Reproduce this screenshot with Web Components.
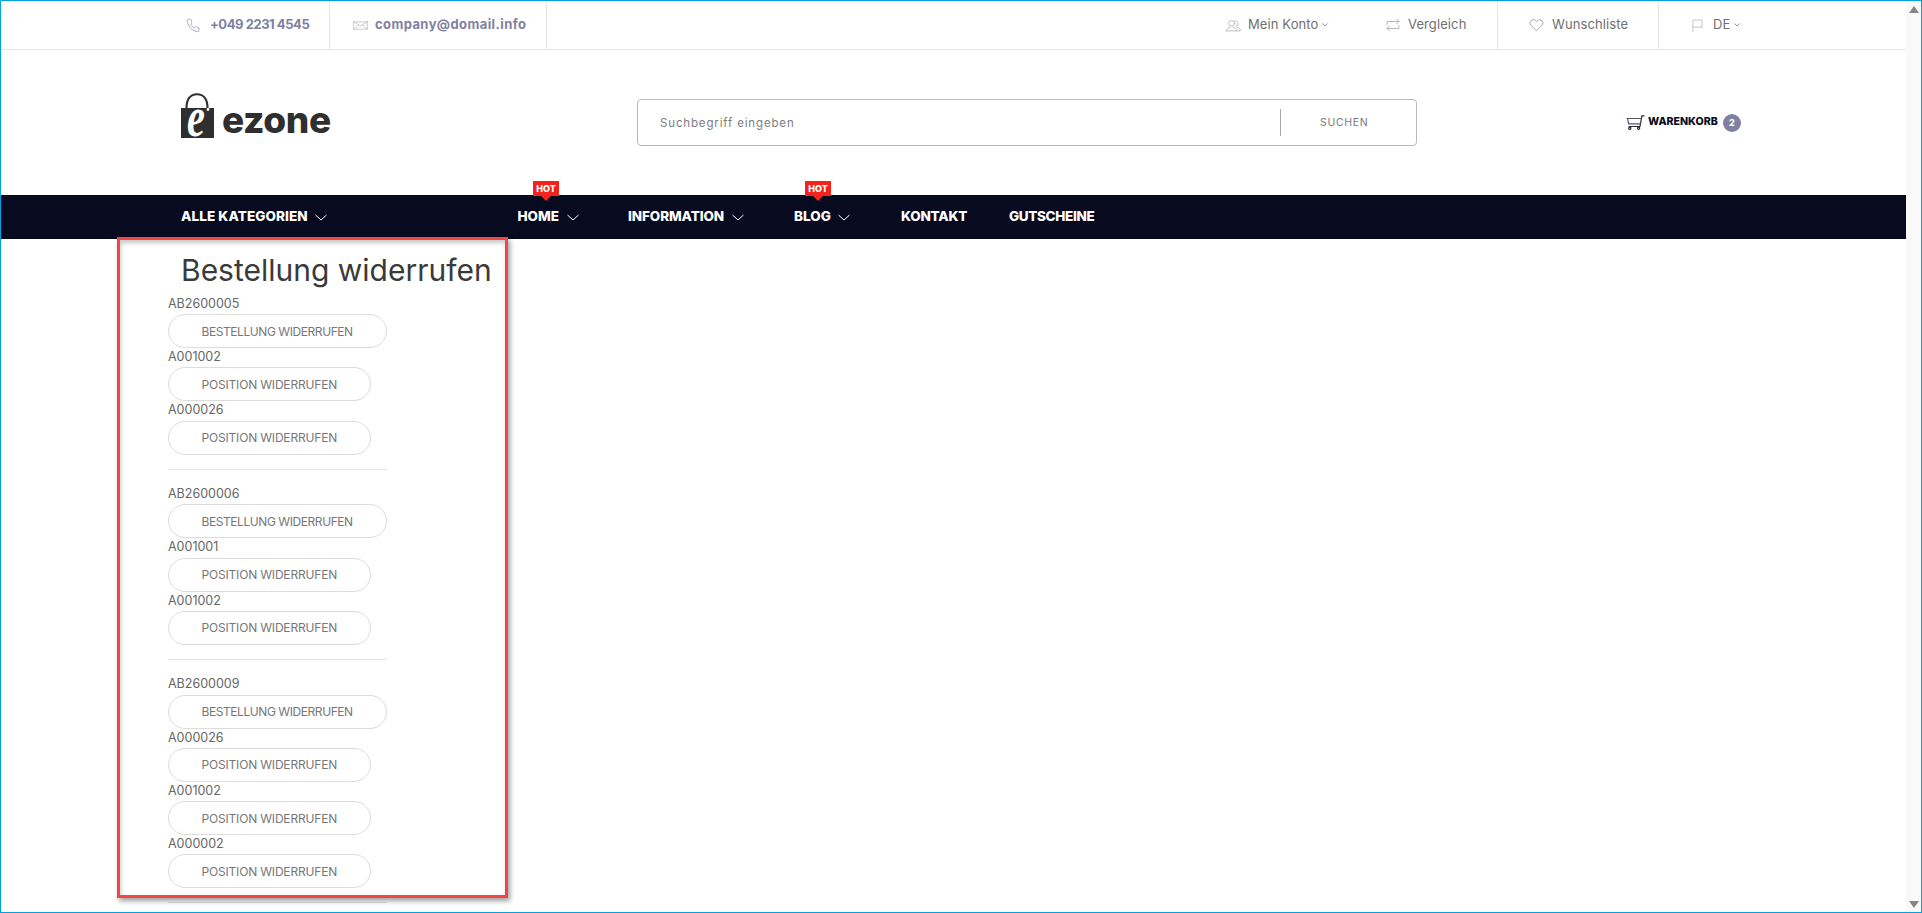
<!DOCTYPE html>
<html lang="de">
<head>
<meta charset="utf-8">
<title>Bestellung widerrufen</title>
<style>
  html, body { margin: 0; padding: 0; height: 913px; overflow: hidden; background: #fff; }
</style>
</head>
<body>
<site-frame>
  <top-bar>
    <top-link slot="left" icon="phone" width="144" pad="0" gap="10" spacing="-.45" strong divider>+049 2231 4545</top-link>
    <top-link slot="left" icon="mail" width="217" pad="23" gap="7" spacing=".4" strong divider>company@domail.info</top-link>
    <top-link slot="right" icon="users" width="160" gap="7" caret>Mein Konto</top-link>
    <top-link slot="right" icon="compare" width="112" gap="8" divider>Vergleich</top-link>
    <top-link slot="right" icon="heart" width="161" pad="31" gap="8" divider>Wunschliste</top-link>
    <top-link slot="right" icon="flag" width="80" pad="33" gap="10" caret>DE</top-link>
  </top-bar>
  <site-header>
    <shop-logo slot="logo"></shop-logo>
    <search-box slot="search" placeholder="Suchbegriff eingeben" action="Suchen"></search-box>
    <cart-link slot="cart" count="2">Warenkorb</cart-link>
  </site-header>
  <main-nav>
    <nav-item width="336.5" spacing=".1" chevron>Alle Kategorien</nav-item>
    <nav-item width="110.5" chevron hot="15.5">Home</nav-item>
    <nav-item width="166" spacing="-.1" chevron>Information</nav-item>
    <nav-item width="107" chevron hot="11">Blog</nav-item>
    <nav-item width="108" spacing="-.2">Kontakt</nav-item>
    <nav-item spacing="-.35">Gutscheine</nav-item>
  </main-nav>
  <withdraw-page heading="Bestellung widerrufen">
    <order-block>
      <withdraw-row code="AB2600005" order>Bestellung widerrufen</withdraw-row>
      <withdraw-row code="A001002">Position widerrufen</withdraw-row>
      <withdraw-row code="A000026">Position widerrufen</withdraw-row>
    </order-block>
    <order-block>
      <withdraw-row code="AB2600006" order>Bestellung widerrufen</withdraw-row>
      <withdraw-row code="A001001">Position widerrufen</withdraw-row>
      <withdraw-row code="A001002">Position widerrufen</withdraw-row>
    </order-block>
    <order-block>
      <withdraw-row code="AB2600009" order>Bestellung widerrufen</withdraw-row>
      <withdraw-row code="A000026">Position widerrufen</withdraw-row>
      <withdraw-row code="A001002">Position widerrufen</withdraw-row>
      <withdraw-row code="A000002">Position widerrufen</withdraw-row>
    </order-block>
  </withdraw-page>
</site-frame>

<script>
// kleine Helfer fuer die Icons der Kopfleiste
const ICONS = {
  phone: { w: 14, h: 15, stroke: '#9fa0b8', body: '<path d="M22 16.92v3a2 2 0 0 1-2.18 2 19.79 19.79 0 0 1-8.63-3.07 19.5 19.5 0 0 1-6-6 19.79 19.79 0 0 1-3.07-8.67A2 2 0 0 1 4.11 2h3a2 2 0 0 1 2 1.72 12.84 12.84 0 0 0 .7 2.81 2 2 0 0 1-.45 2.11L8.09 9.91a16 16 0 0 0 6 6l1.27-1.27a2 2 0 0 1 2.11-.45 12.84 12.84 0 0 0 2.81.7A2 2 0 0 1 22 16.92z"/>' },
  mail: { w: 15, h: 11, stroke: '#b9b9c6', body: '<path d="M1 4h22v16H1z"/><path d="M1 4l11 9 11-9M1 20l8-9.5M23 20l-8-9.5"/>' },
  users: { w: 15, h: 13, stroke: '#b3b3b3', body: '<circle cx="9" cy="8" r="5"/><path d="M1 22c0-5 3-6 6-7M11 15c3 1 6 2 6 7H1"/><path d="M13 3.4a5 5 0 0 1 3 9.6M17 15c3 1 6 2 6 7h-6"/>' },
  compare: { w: 14, h: 14, stroke: '#a5a5a5', body: '<path d="M2 11V6h20M18 2l4 4-4 4"/><path d="M22 13v5H2M6 14l-4 4 4 4"/>' },
  heart: { w: 15, h: 14, stroke: '#9a9a9a', body: '<path d="M20.84 4.61a5.5 5.5 0 0 0-7.78 0L12 5.67l-1.06-1.06a5.5 5.5 0 0 0-7.78 7.78L12 22l8.84-9.61a5.5 5.5 0 0 0 0-7.78z"/>' },
  flag: { w: 11, h: 13, stroke: '#b5a9a9', body: '<path d="M2 24V2h20v13H2"/>' }
};

class SiteFrame extends HTMLElement {
  constructor() {
    super();
    this.attachShadow({ mode: 'open' });
    this.shadowRoot.innerHTML = `
      <style>
        :host {
          display: flex; box-sizing: border-box; width: 1922px; height: 913px;
          border: 1px solid #00a3e0; overflow: hidden; background: #fff;
          font-family: Inter, "Noto Sans", sans-serif; color: #666;
        }
        .page { flex: 0 0 1905px; width: 1905px; height: 911px; overflow: hidden; display: flex; flex-direction: column; }
        .scroll {
          flex: 1; background: #f9f9f9; display: flex; flex-direction: column;
          justify-content: space-between; align-items: center; padding: 5px 0 4px;
        }
        .up, .down { width: 0; height: 0; border-left: 5px solid transparent; border-right: 5px solid transparent; }
        .up { border-bottom: 7px solid #858585; }
        .down { border-top: 7px solid #858585; }
      </style>
      <div class="page"><slot></slot></div>
      <div class="scroll"><span class="up"></span><span class="down"></span></div>
    `;
  }
}

class TopBar extends HTMLElement {
  constructor() {
    super();
    this.attachShadow({ mode: 'open' });
    this.shadowRoot.innerHTML = `
      <style>
        :host {
          display: flex; flex: 0 0 auto; height: 48px; border-bottom: 1px solid #e6e6e6;
          padding: 0 167px 0 185px; justify-content: space-between;
        }
        .group { display: flex; }
      </style>
      <div class="group"><slot name="left"></slot></div>
      <div class="group"><slot name="right"></slot></div>
    `;
  }
}

class TopLink extends HTMLElement {
  connectedCallback() {
    if (this.shadowRoot) return;
    const icon = ICONS[this.getAttribute('icon')];
    this.attachShadow({ mode: 'open' });
    this.shadowRoot.innerHTML = `
      <style>
        :host {
          display: flex; align-items: center; box-sizing: border-box; height: 48px;
          width: ${this.getAttribute('width')}px;
          padding-left: ${this.getAttribute('pad') || 0}px;
          gap: ${this.getAttribute('gap')}px;
          font-size: 13px; color: #6f6f6f; white-space: nowrap;
          letter-spacing: ${this.getAttribute('spacing') || '.1'}px;
        }
        :host([divider]) { border-right: 1px solid #e6e6e6; }
        :host([strong]) { font-weight: 700; color: #8081a1; }
        svg { flex: none; display: block; }
        .label { margin-bottom: 3px; }
        .caret { margin-left: -${this.getAttribute('gap')}px; transform: translateX(4px); }
      </style>
      <svg width="${icon.w}" height="${icon.h}" viewBox="0 0 24 24" preserveAspectRatio="none" fill="none"
           stroke="${icon.stroke}" stroke-width="1.4" stroke-linejoin="round" stroke-linecap="round">${icon.body}</svg>
      <span class="label"><slot></slot></span>
      ${this.hasAttribute('caret') ? '<svg class="caret" width="6" height="4" viewBox="0 0 6 4" fill="none" stroke="#999"><path d="M.5.5 3 3 5.5.5"/></svg>' : ''}
    `;
  }
}

class SiteHeader extends HTMLElement {
  constructor() {
    super();
    this.attachShadow({ mode: 'open' });
    this.shadowRoot.innerHTML = `
      <style>
        :host {
          display: grid; flex: 0 0 auto; height: 145px; box-sizing: border-box; padding-left: 180px;
          grid-template-columns: 456px 780px auto; align-items: center;
        }
        .cart { margin-left: 209px; }
      </style>
      <slot name="logo"></slot>
      <slot name="search"></slot>
      <div class="cart"><slot name="cart"></slot></div>
    `;
  }
}

class ShopLogo extends HTMLElement {
  constructor() {
    super();
    this.attachShadow({ mode: 'open' });
    this.shadowRoot.innerHTML = `
      <style>
        :host { display: flex; align-items: flex-end; width: 150px; height: 45px; margin-top: -14px; color: #2f2f2f; }
        svg { display: block; flex: none; margin: -10px 0 -15px; }
        .word {
          font-family: Inter, sans-serif; font-weight: 800; font-size: 37px; line-height: 30px;
          letter-spacing: -.4px; margin-left: 8px; margin-bottom: 3px;
        }
      </style>
      <svg width="33" height="70" viewBox="0 -10 33 70">
        <path d="M5.5 15C5.5 6 9.5 1.2 16 1.2S26.5 6 26.5 15" fill="none" stroke="#2f2f2f" stroke-width="2.1"/>
        <path d="M0 15h33v30H0z" fill="#2f2f2f"/>
        <circle cx="27" cy="16.5" r="1.4" fill="#fff"/>
        <text transform="translate(6 43) scale(.72 1)" font-family="Liberation Serif" font-style="italic" font-weight="700" font-size="56" fill="#fff">e</text>
      </svg>
      <span class="word">ezone</span>
    `;
  }
}

class SearchBox extends HTMLElement {
  connectedCallback() {
    if (this.shadowRoot) return;
    this.attachShadow({ mode: 'open' });
    this.shadowRoot.innerHTML = `
      <style>
        :host {
          display: flex; align-items: center; box-sizing: border-box; width: 780px; height: 47px;
          border: 1px solid #b8b8b8; border-radius: 4px; background: #fff;
        }
        .hint { flex: 0 0 642px; box-sizing: border-box; padding-left: 22px; font-size: 11.5px; letter-spacing: .85px; color: #7d7d7d; }
        .sep { width: 1px; height: 27px; background: #a9a9a9; }
        .go { padding-left: 39px; font-size: 10.5px; letter-spacing: .7px; text-transform: uppercase; color: #7a7a7a; }
      </style>
      <span class="hint">${this.getAttribute('placeholder')}</span>
      <span class="sep"></span>
      <span class="go">${this.getAttribute('action')}</span>
    `;
  }
}

class CartLink extends HTMLElement {
  connectedCallback() {
    if (this.shadowRoot) return;
    this.attachShadow({ mode: 'open' });
    this.shadowRoot.innerHTML = `
      <style>
        :host { display: flex; align-items: center; white-space: nowrap; }
        svg { display: block; margin-right: 3px; }
        .txt { font-size: 10.6px; font-weight: 800; text-transform: uppercase; color: #0a0a20; margin-top: -3px; }
        .num {
          width: 18px; height: 18px; margin-left: 5px; border-radius: 50%; background: #8081a1; color: #fff;
          font-size: 9px; font-weight: 800; display: flex; align-items: center; justify-content: center;
        }
      </style>
      <svg width="19" height="15" viewBox="0 0 19 15" fill="none" stroke="#2b2b3a" stroke-width="1.2">
        <path d="M18.5 .8h-2.6L14 11.5H2.6"/>
        <path d="M.6 3.5h14.8M1.6 3.5l1 5.4h11.8" stroke="#55566a"/>
        <circle cx="3.8" cy="13.2" r="1.1"/><circle cx="12.6" cy="13.2" r="1.1"/>
      </svg>
      <span class="txt"><slot></slot></span>
      <span class="num">${this.getAttribute('count')}</span>
    `;
  }
}

class MainNav extends HTMLElement {
  constructor() {
    super();
    this.attachShadow({ mode: 'open' });
    this.shadowRoot.innerHTML = `
      <style>
        :host { display: flex; flex: 0 0 auto; height: 44px; background: #080b20; padding-left: 180px; }
      </style>
      <slot></slot>
    `;
  }
}

class NavItem extends HTMLElement {
  connectedCallback() {
    if (this.shadowRoot) return;
    const w = this.getAttribute('width');
    const hot = this.getAttribute('hot');
    this.attachShadow({ mode: 'open' });
    this.shadowRoot.innerHTML = `
      <style>
        :host {
          display: flex; align-items: center; position: relative; height: 44px; flex: none; box-sizing: border-box;
          padding-bottom: 2px;
          ${w ? 'width:' + w + 'px;' : ''}
          font-size: 13.5px; font-weight: 800; color: #fff; text-transform: uppercase; white-space: nowrap;
          letter-spacing: ${this.getAttribute('spacing') || 0}px;
        }
        svg { display: block; margin-left: 7.5px; margin-top: 2px; }
        .hot {
          position: absolute; top: -14px; left: ${hot}px; width: 26px; height: 15px; background: #f5231b;
          color: #fff; font-size: 9px; font-weight: 800; line-height: 15px; text-align: center; letter-spacing: 0;
        }
        .hot::after {
          content: ""; position: absolute; left: 8px; top: 15px; border-left: 5px solid transparent;
          border-right: 5px solid transparent; border-top: 5px solid #f5231b;
        }
      </style>
      ${hot ? '<span class="hot">Hot</span>' : ''}
      <span><slot></slot></span>
      ${this.hasAttribute('chevron') ? '<svg width="12" height="7" viewBox="0 0 12 7" fill="none" stroke="#fff" stroke-width="1"><path d="M.5 1 6 6l5.5-5"/></svg>' : ''}
    `;
  }
}

class WithdrawPage extends HTMLElement {
  connectedCallback() {
    if (this.shadowRoot) return;
    this.attachShadow({ mode: 'open' });
    this.shadowRoot.innerHTML = `
      <style>
        :host { display: block; position: relative; flex: 1; padding: 13px 0 0 167px; }
        h1 { margin: 0 0 6px 13px; font-size: 30px; line-height: 36px; font-weight: 400; color: #3a3a3a; white-space: nowrap; }
        .mark {
          position: absolute; left: 116px; top: -2px; width: 391px; height: 661px; box-sizing: border-box;
          border: 3px solid #f44545; pointer-events: none;
          box-shadow: 2px 3px 5px rgba(0,0,0,.38), inset 1px 3px 4px rgba(0,0,0,.22);
        }
      </style>
      <h1>${this.getAttribute('heading')}</h1>
      <slot></slot>
      <div class="mark"></div>
    `;
  }
}

class OrderBlock extends HTMLElement {
  constructor() {
    super();
    this.attachShadow({ mode: 'open' });
    this.shadowRoot.innerHTML = `
      <style>
        :host { display: block; width: 219px; }
        hr { border: 0; height: 1px; background: #e4e4e4; margin: 15px 0 14.6px; }
      </style>
      <slot></slot>
      <hr>
    `;
  }
}

class WithdrawRow extends HTMLElement {
  connectedCallback() {
    if (this.shadowRoot) return;
    this.attachShadow({ mode: 'open' });
    this.shadowRoot.innerHTML = `
      <style>
        :host { display: block; }
        .code { font-size: 12.5px; line-height: 20.2px; color: #666; }
        button {
          display: block; box-sizing: border-box; height: 34px; padding: 0 33px 0 32.5px; margin-bottom: -1px; background: #fff;
          border: 1px solid #dcdcdc; border-radius: 17px; font: inherit; font-size: 12px; letter-spacing: -.18px; color: #777;
          text-transform: uppercase; white-space: nowrap;
        }
        :host([order]) button { letter-spacing: -.43px; }
      </style>
      <div class="code">${this.getAttribute('code')}</div>
      <button type="button"><slot></slot></button>
    `;
  }
}

customElements.define('site-frame', SiteFrame);
customElements.define('top-bar', TopBar);
customElements.define('top-link', TopLink);
customElements.define('site-header', SiteHeader);
customElements.define('shop-logo', ShopLogo);
customElements.define('search-box', SearchBox);
customElements.define('cart-link', CartLink);
customElements.define('main-nav', MainNav);
customElements.define('nav-item', NavItem);
customElements.define('withdraw-page', WithdrawPage);
customElements.define('order-block', OrderBlock);
customElements.define('withdraw-row', WithdrawRow);
</script>
</body>
</html>
